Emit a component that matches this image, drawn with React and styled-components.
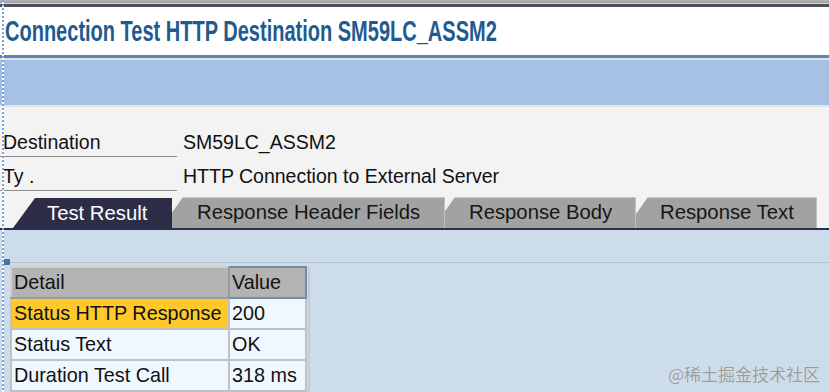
import React from "react";
import styled, { createGlobalStyle } from "styled-components";

const GlobalStyle = createGlobalStyle`
  html, body {
    margin: 0;
    padding: 0;
    background: #ffffff;
  }
  body {
    font-family: "Liberation Sans", Arial, sans-serif;
  }
`;

const Screen = styled.div`
  position: relative;
  width: 829px;
  height: 392px;
  overflow: hidden;
  display: flex;
  flex-direction: column;
  font-size: 19.5px;
  color: #111;
`;

const DashedEdge = styled.div`
  position: absolute;
  left: 2px;
  top: 0;
  bottom: 0;
  width: 2px;
  z-index: 20;
  background: repeating-linear-gradient(
    to bottom,
    #7ba1da 0 2px,
    #ffffff 2px 4px
  );
`;

const WindowTop = styled.div`
  height: 3px;
  background: linear-gradient(#b8b8b8, #9c9c9c);
  border-bottom: 1px solid #d6d6d6;
`;

const DarkRule = styled.div`
  height: 3px;
  background: #4d4d5e;
`;

const TitleBar = styled.div`
  height: 48px;
  background: #ffffff;
  padding: 10px 0 0 5px;
  box-sizing: border-box;
  overflow: hidden;
`;

const Title = styled.h1`
  margin: 0;
  font-size: 29px;
  line-height: 29px;
  font-weight: bold;
  color: #1f5b8f;
  white-space: nowrap;
  transform: scaleX(0.69);
  transform-origin: left center;
`;

const Rule = styled.div`
  height: ${(p) => p.$h}px;
  background: ${(p) => p.$c};
`;

const ToolBand = styled.div`
  height: 45px;
  background: #a5c1e4;
`;

const HeaderArea = styled.div`
  background: #f3f3f3;
  padding-top: 16px;
  display: flex;
  flex-direction: column;
`;

const FieldRow = styled.div`
  display: flex;
  height: 34px;
`;

const FieldLabel = styled.div`
  width: 174px;
  padding-left: 3px;
  border-bottom: 1px solid #8e8e8e;
  display: flex;
  align-items: flex-end;
  padding-bottom: 4px;
  line-height: 20px;
  white-space: nowrap;
`;

const FieldValue = styled.div`
  margin-left: 6px;
  display: flex;
  align-items: flex-end;
  padding-bottom: 5px;
  line-height: 20px;
  white-space: nowrap;
`;

const TabStrip = styled.div`
  display: flex;
  align-items: flex-end;
  margin-top: 6px;
  height: 31px;
  padding-left: 13px;
  border-bottom: 2px solid #2e2e4a;
`;

const Tab = styled.div`
  position: relative;
  z-index: ${(p) => p.$z};
  width: ${(p) => p.$w}px;
  margin-left: ${(p) => p.$ml}px;
  height: ${(p) => (p.$active ? 30 : 31)}px;
  box-sizing: border-box;
  padding-left: ${(p) => p.$pl}px;
  display: flex;
  align-items: center;
  white-space: nowrap;
  font-size: 20.3px;
  background: ${(p) => (p.$active ? "#2d2d47" : "#a2a2a2")};
  color: ${(p) => (p.$active ? "#ffffff" : "#161616")};
  box-shadow: ${(p) =>
    p.$active ? "none" : "inset 0 1px 0 #c6c6c6, inset -1px 0 0 #c0c0c0"};
  clip-path: polygon(22px 0, 100% 0, 100% 100%, 0 100%);
`;

const Content = styled.div`
  flex: 1;
  background: #cddcea;
  padding-top: 29px;
  display: flex;
  flex-direction: column;
`;

const GridToolbar = styled.div`
  display: flex;
  align-items: center;
  height: 6px;
`;

const Marker = styled.div`
  width: 6px;
  height: 6px;
  margin-left: 4px;
  background: #4f6f9f;
`;

const GridLine = styled.div`
  flex: 1;
  height: 1px;
  background: #b3bfca;
`;

const TableFrame = styled.div`
  margin: 1px 0 0 10px;
  align-self: flex-start;
  border-right: 2px solid #c3ccd4;
  padding-right: 1px;
`;

const Table = styled.table`
  border-collapse: collapse;
  table-layout: fixed;
  font-size: 19.8px;
`;

const HeadCell = styled.th`
  width: ${(p) => p.$w}px;
  height: 31px;
  box-sizing: border-box;
  padding: 0 0 0 2px;
  text-align: left;
  font-weight: normal;
  color: #111;
  background: #b3b3b3;
  border: 2px solid ${(p) => (p.$selected ? "#6f8ca3" : "#9a9a9a")};
  border-top-color: ${(p) => (p.$selected ? "#6f8ca3" : "#cfcfcf")};
  border-left-color: ${(p) => (p.$selected ? "#6f8ca3" : "#cfcfcf")};
  white-space: nowrap;
`;

const Cell = styled.td`
  height: 31px;
  box-sizing: border-box;
  padding: 0 0 0 2px;
  border: 2px solid #c2c2c2;
  background: ${(p) => (p.$highlight ? "#ffc92e" : "#eff8fe")};
  white-space: nowrap;
  overflow: hidden;
`;

const Watermark = styled.div`
  position: absolute;
  right: 9px;
  bottom: 6px;
  font-family: "Noto Sans CJK SC", sans-serif;
  font-size: 17px;
  color: rgba(120, 120, 120, 0.7);
  text-shadow: 0 0 1px rgba(255, 255, 255, 0.6);
`;

const tabs = [
  { label: "Test Result", w: 159, ml: 0, pl: 34, active: true },
  { label: "Response Header Fields", w: 284, ml: -11, pl: 36 },
  { label: "Response Body", w: 203, ml: -12, pl: 36 },
  { label: "Response Text", w: 191, ml: -10, pl: 34 },
];

const rows = [
  { detail: "Status HTTP Response", value: "200", highlight: true },
  { detail: "Status Text", value: "OK" },
  { detail: "Duration Test Call", value: "318 ms" },
];

export default function App() {
  return (
    <>
      <GlobalStyle />
      <Screen>
        <DashedEdge />
        <WindowTop />
        <DarkRule />
        <TitleBar>
          <Title>Connection Test HTTP Destination SM59LC_ASSM2</Title>
        </TitleBar>
        <Rule $h={3} $c="#5d87b3" />
        <Rule $h={2} $c="#dbe3e2" />
        <ToolBand />
        <Rule $h={2} $c="#e0e7e3" />
        <HeaderArea>
          <FieldRow>
            <FieldLabel>Destination</FieldLabel>
            <FieldValue>SM59LC_ASSM2</FieldValue>
          </FieldRow>
          <FieldRow>
            <FieldLabel>Ty .</FieldLabel>
            <FieldValue>HTTP Connection to External Server</FieldValue>
          </FieldRow>
          <TabStrip>
            {tabs.map((t, i) => (
              <Tab
                key={t.label}
                $w={t.w}
                $ml={t.ml}
                $pl={t.pl}
                $active={t.active}
                $z={t.active ? 10 : tabs.length - i}
              >
                {t.label}
              </Tab>
            ))}
          </TabStrip>
        </HeaderArea>
        <Content>
          <GridToolbar>
            <Marker />
            <GridLine />
          </GridToolbar>
          <TableFrame>
            <Table>
              <thead>
                <tr>
                  <HeadCell $w={218}>Detail</HeadCell>
                  <HeadCell $w={77} $selected>
                    Value
                  </HeadCell>
                </tr>
              </thead>
              <tbody>
                {rows.map((r) => (
                  <tr key={r.detail}>
                    <Cell $highlight={r.highlight}>{r.detail}</Cell>
                    <Cell>{r.value}</Cell>
                  </tr>
                ))}
              </tbody>
            </Table>
          </TableFrame>
        </Content>
        <Watermark>@稀土掘金技术社区</Watermark>
      </Screen>
    </>
  );
}
